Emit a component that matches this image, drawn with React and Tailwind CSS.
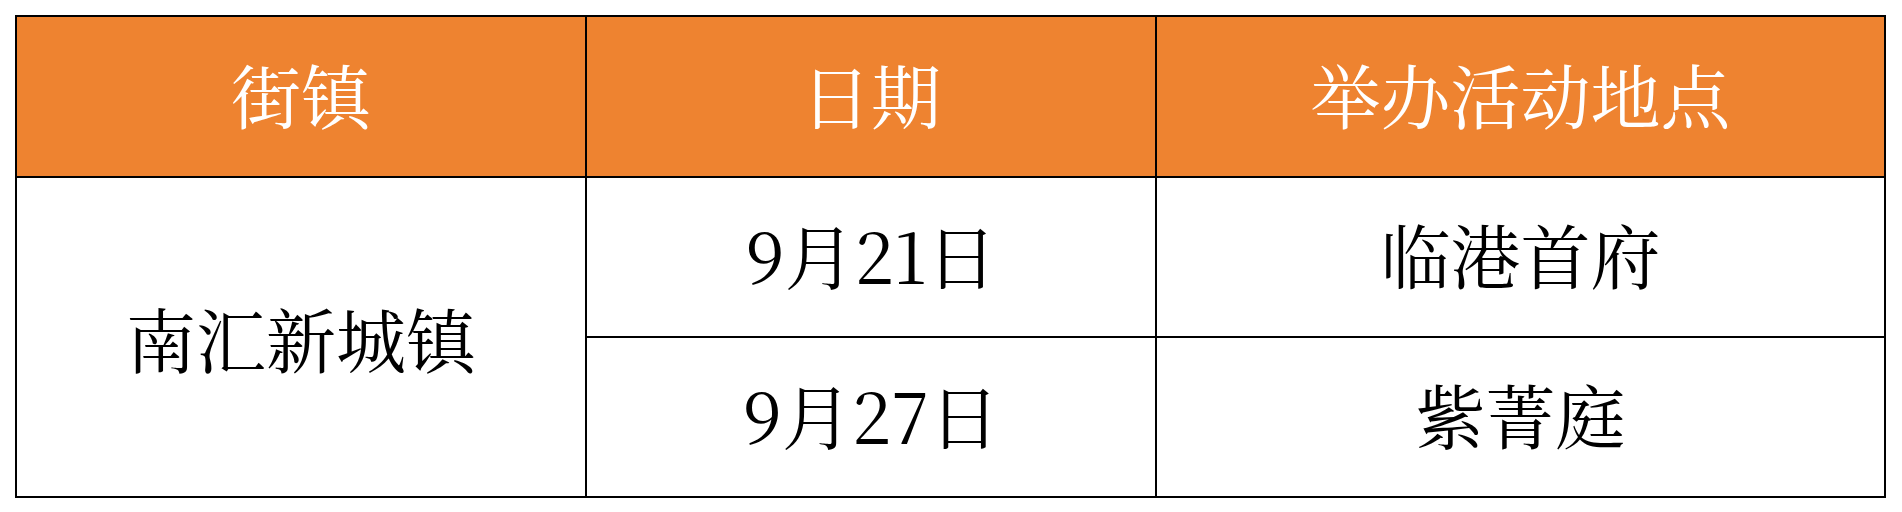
const rows = [
  { date: '9月21日', place: '临港首府' },
  { date: '9月27日', place: '紫菁庭' },
];

const font = "font-['Noto_Serif_CJK_SC','Liberation_Serif','Noto_Sans_CJK_SC',serif]";

export default function App() {
  return (
    <div className="w-[1902px] h-[512px] bg-white pt-[15px] pl-[15px]">
      <table className={`table-fixed border-collapse w-[1871px] text-[70px] leading-none ${font}`}>
        <colgroup>
          <col className="w-[570px]" />
          <col className="w-[570px]" />
          <col />
        </colgroup>
        <thead>
          <tr className="h-[161px] bg-[#EE8330] text-white">
            <th className="border-2 border-black font-normal text-center pb-[6px]">街镇</th>
            <th className="border-2 border-black font-normal text-center pb-[6px]">日期</th>
            <th className="border-2 border-black font-normal text-center pb-[6px]">举办活动地点</th>
          </tr>
        </thead>
        <tbody className="text-black">
          {rows.map((r, i) => (
            <tr key={r.date} className="h-[160px]">
              {i === 0 && (
                <td rowSpan={2} className="border-2 border-black text-center align-middle pt-[2px]">
                  南汇新城镇
                </td>
              )}
              <td className="border-2 border-black text-center align-middle pb-[6px]">{r.date}</td>
              <td className="border-2 border-black text-center align-middle pb-[6px]">{r.place}</td>
            </tr>
          ))}
        </tbody>
      </table>
    </div>
  );
}
